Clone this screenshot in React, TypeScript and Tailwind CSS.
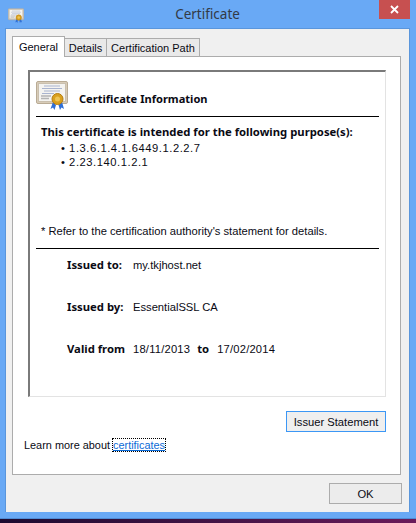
const CertIcon = ({ small }: { small?: boolean }) => (
  <svg width={small ? 16 : 32} height={small ? 16 : 30} viewBox="0 0 32 30" className="block">
    <rect x="0.5" y="0.5" width="31" height="22" rx="1.5" fill="#d8ccb8" stroke="#b9ab95" />
    <rect x="2.5" y="2.5" width="27" height="18" fill="#f4f3f0" stroke="#c9bfae" />
    <path d="M8 5h16M6 7.5h20M8 10h16M6 12.5h12" stroke="#a9b4cf" strokeWidth="1" />
    <path d="M5 15h10M5 17.5h8" stroke="#b4b4b4" strokeWidth="1.5" />
    <path d="M17 21l-2.500 7 2.500-1.500 1.500 2.500 1.500-5zM26 21l2 7-2.500-1.500-1.500 2.500-1.500-5z" fill="#2f6fd6" />
    <circle cx="21.500" cy="18" r="5.500" fill="#d9a01e" stroke="#b67d10" />
    <circle cx="21.500" cy="18" r="2.500" fill="#efc453" />
  </svg>
);

const Tab = ({ label, width }: { label: string; width: string }) => (
  <div className={`flex h-[19px] items-center justify-center border border-b-0 border-[#acacac] bg-[#e9e9e9] -ml-px text-[11px] ${width}`}>
    {label}
  </div>
);

const Row = ({ label, children }: { label: string; children: React.ReactNode }) => (
  <div className="flex h-[14px] items-center">
    <span className="w-[66px] font-bold whitespace-nowrap [font-family:'Noto_Sans',sans-serif] text-[11.3px]">{label}</span>
    {children}
  </div>
);

export default function App() {
  return (
    <div className="h-[523px] w-[416px] overflow-hidden bg-gradient-to-r from-[#1c0a30] to-[#6a1a5a] text-[11.2px] leading-[14px] text-[#0a0a14] [font-family:'Liberation_Sans',sans-serif]">
      <div className="flex h-[519px] flex-col border-b border-[#4f8cd4] bg-[#69a9f5] pb-[6px] pl-[5px] pr-[6px]">
        <div className="relative flex h-[28px] flex-none items-center justify-center text-[13.5px] text-[#333a45] [font-family:'Noto_Sans',sans-serif]">
          <div className="absolute left-[3px] top-[8px]"><CertIcon small /></div>
          Certificate
          <div className="absolute right-[0px] top-0 flex h-[19px] w-[31px] items-center justify-center bg-[#c75050]">
            <svg width="9" height="9" viewBox="0 0 9 9">
              <path d="M1 1l7 7M8 1l-7 7" stroke="#fff" strokeWidth="1.800" />
            </svg>
          </div>
        </div>

        <div className="flex flex-1 flex-col border border-b-0 border-[#5a96dc] bg-[#f0f0f0] px-[6px] pt-[7px]">
          <div className="flex h-[21px] items-end">
            <div className="relative z-10 flex h-[21px] w-[53px] items-center justify-center border border-b-0 border-[#acacac] bg-white text-[11px]">
              General
            </div>
            <Tab label="Details" width="w-[43px]" />
            <Tab label="Certification Path" width="w-[94px]" />
          </div>

          <div className="-mt-px flex h-[419px] w-[389px] flex-col border border-[#acacac] bg-white pl-[15px] pt-[13px]">
            <div className="flex h-[327px] w-[358px] flex-col border-2 border-r border-b border-[#e3e3e3] border-t-[#7a7a7a] border-l-[#7a7a7a] px-[6px]">
              <div className="flex h-[45px] flex-none items-center gap-[11px] border-b border-black">
                <div className="mt-[4px]"><CertIcon /></div>
                <span className="pt-[9px] font-bold [font-family:'Noto_Sans',sans-serif] text-[11.1px]">Certificate Information</span>
              </div>
              <div className="whitespace-nowrap pl-[5px] pt-[8px] font-bold [font-family:'Noto_Sans',sans-serif] text-[11.3px]">This certificate is intended for the following purpose(s):</div>
              <ul className="pl-[25px] pt-[2px] tracking-[0.55px]">
                <li className="h-[14px]">• 1.3.6.1.4.1.6449.1.2.2.7</li>
                <li className="h-[14px]">• 2.23.140.1.2.1</li>
              </ul>
              <div className="mt-[55px] flex h-[25px] items-start pl-[5px] border-b border-black">
                <span>* Refer to the certification authority's statement for details.</span>
              </div>
              <div className="flex flex-col gap-[28px] pl-[31px] pt-[9px]">
                <Row label="Issued to:">my.tkjhost.net</Row>
                <Row label="Issued by:">EssentialSSL CA</Row>
                <Row label="Valid from">
                  <span className="tracking-[0.2px]">18/11/2013</span>
                  <span className="ml-[7px] mr-[8px] font-bold [font-family:'Noto_Sans',sans-serif] text-[11.3px]">to</span>
                  <span className="tracking-[0.2px]">17/02/2014</span>
                </Row>
              </div>
            </div>
            <div className="flex w-[358px] justify-end pt-[14px]">
              <button className="h-[21px] w-[100px] border border-[#3c97f5] bg-[#efefef] text-[11.2px]">Issuer Statement</button>
            </div>
            <div className="-ml-[4px] pt-[6px] text-[10.9px]">
              Learn more about{" "}
              <span className="text-[#0a6ad6] underline outline-1 outline-dotted outline-black">certificates</span>
            </div>
          </div>

          <div className="flex flex-1 justify-end pt-[8px]">
            <button className="mr-[1px] h-[21px] w-[73px] border border-[#acacac] bg-[#ececec]">OK</button>
          </div>
        </div>
      </div>
    </div>
  );
}
